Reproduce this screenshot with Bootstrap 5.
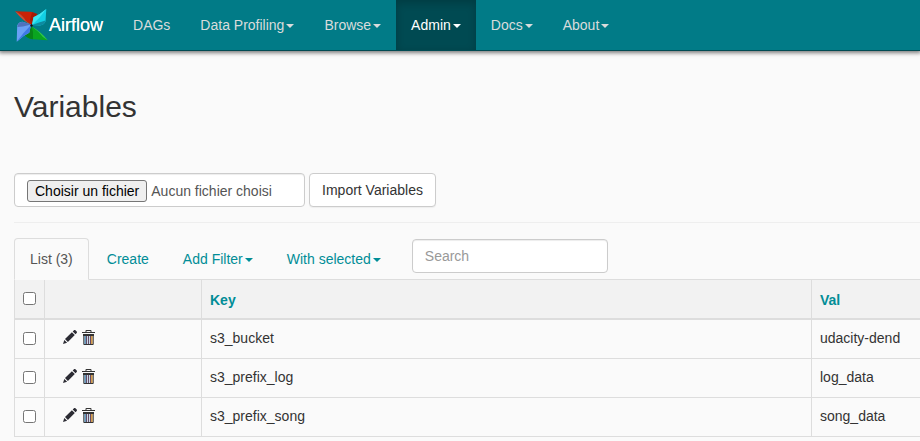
<!DOCTYPE html>
<html lang="fr">
<head>
<meta charset="utf-8">
<meta name="viewport" content="width=device-width, initial-scale=1">
<title>Airflow - Variables</title>
<link href="https://cdn.jsdelivr.net/npm/bootstrap@5.3.0/dist/css/bootstrap.min.css" rel="stylesheet">
<style>
body{font-family:"Liberation Sans",Arial,sans-serif;font-size:14px;line-height:20px;color:#333;background:#fafafa}
.af-bar{height:51px;background:#017b87;border-bottom:1px solid #014b53;box-shadow:0 1px 4px 1px rgba(0,0,0,.5)}
.af-brand{padding:0 15px 0 14px;gap:1px;color:#fff;font-size:18px;height:50px;text-shadow:0 0 .5px #fff}
.af-brand:hover{color:#fff}
.af-bar .nav-link{padding:15px;color:#d9dcdc;height:50px;line-height:20px;white-space:nowrap}
.af-bar .nav-link.active{color:#fff;background:#004a52;box-shadow:inset 0 3px 8px rgba(0,0,0,.2)}
.dropdown-toggle::after{border-top:4px solid;border-left:4px solid transparent;border-right:4px solid transparent;margin-left:2px;vertical-align:2px}
.af-page{padding:0 0 0 14px}
h1.af-title{font-size:30px;line-height:33px;font-weight:400;margin:39px 0 50px}
.af-field{background:#fff;border:1px solid #ccc;border-radius:4px;height:34px}
.af-file{width:291px;padding:6px 12px;color:#555;line-height:22px;box-shadow:inset 0 1px 1px rgba(0,0,0,.075)}
.af-choose{border:1px solid #767676;border-radius:3px;background:#efefef;color:#000;height:22px;padding:0 7px;line-height:20px;white-space:nowrap;margin-right:4px}
.af-import{padding:6px 12px;color:#333;font-size:14px;line-height:20px;width:127px;white-space:nowrap;box-shadow:0 1px 1px rgba(0,0,0,.05)}
.af-rule{height:1px;background:#eee;margin:15px 0}
.af-tabs{border-bottom:1px solid #ddd;height:42px;flex-wrap:nowrap}
.af-tabs .nav-link{padding:10px 15px;color:#018d97;line-height:20px;border-radius:4px 4px 0 0;margin:0 2px 0 0;height:42px;white-space:nowrap}
.af-tabs .nav-link.active{color:#555;background:#fafafa;border-color:#ddd #ddd #fafafa}
.af-search{width:196px;padding:6px 12px;font-size:14px;line-height:20px;color:#555;margin:1px 0 0 13px;box-shadow:inset 0 1px 1px rgba(0,0,0,.075)}
.af-search::placeholder{color:#999;opacity:1}
.af-table{width:calc(100% + 1px);table-layout:fixed;border-collapse:collapse;margin-top:-1px}
.af-table th,.af-table td{border:1px solid #ddd;padding:8px 8px 10px;height:39px;vertical-align:middle;line-height:20px}
.af-table th:last-child,.af-table td:last-child{border-right:0}
.af-table th{background:#f2f2f2;color:#018d97;border-bottom-width:2px;padding:10px 8px 8px}
.af-table .pick{padding:0 0 1px 8px}
.pick input{appearance:none;display:block;width:13px;height:13px;border:1px solid #767676;border-radius:2.5px;background:#fff;margin:0}
.af-table .acts{padding:0 0 4px 18px}
.acts .d-flex{gap:5px}
</style>
</head>
<body class="overflow-hidden">
<svg width="0" height="0" class="d-none">
<symbol id="pencil" viewBox="0 0 14 14"><path fill="#2b2b33" d="M0 14l1.3-4.1 2.8 2.8zM2 9.1L8.9 2.2l2.9 2.900L4.900 12zM9.700 1.500L11 .3c.5-.4 1-.4 1.400 0l1.300 1.300c.4.4.4 1 0 1.400l-1.200 1.300z"/></symbol>
<symbol id="trash" viewBox="0 0 13 15"><path fill="#333" d="M3.500 2V.9Q3.500 0 4.400 0h4.200q.9 0 .9.9V2H13v1H0V2zm1 0h4V1h-4zM1 4h11v2H1z"/><path fill="#333" d="M1.300 6h1.200v8H1.300zM10.500 6h1.200v8h-1.200zM1.500 14h10v1h-10z"/><path fill="#669bbf" d="M2.500 6H4v8H2.500z"/><path fill="#654c65" d="M4 6h1v8H4zM6 6h1v8H6zM8 6h1v8H8z"/><path fill="#c9d9e8" d="M5 6h1v8H5zM7 6h1v8H7z"/><path fill="#d49b49" d="M9 6h1.500v8H9z"/></symbol>
</svg>
<nav class="af-bar d-flex">
<a class="af-brand d-flex align-items-center text-decoration-none" href="#">
<svg width="34" height="34" viewBox="0 0 34 34">
<path fill="#c92206" d="M1 3.200L16 3.700Q22 4.500 24.500 8L17.500 17 12 13Q8 6 1 3.200z"/><path fill="#a51a06" d="M18 4.200Q22.500 5 24.500 8L17.500 17 16 12z"/><path fill="#e0452a" d="M1 3.200Q10 14 17.500 17L12 13Q8 6 1 3.200z"/>
<path fill="#12cfe4" d="M32.300 1L31.500 13.500Q30 17 26 17.500L18 17 19.500 9.300Q26 6.500 32.300 1z"/><path fill="#0e8aa0" d="M31.500 12.500Q30.500 17 26 17.500L18 17 25 14.500z"/><path fill="#3fe6f2" d="M32.300 1Q26 10 18 17L19.500 9.300Q26 6.500 32.300 1z"/>
<path fill="#0aa51f" d="M33.800 32.200L19.300 31.300Q13 30.500 10.800 27L17.700 18.500 24.300 23.700Q28 29 33.800 32.200z"/><path fill="#078418" d="M19 31.300Q13 30.500 10.800 27L17.700 18.500 19 24z"/><path fill="#35cf3c" d="M33.800 32.200Q26 23 17.700 18.500L24.300 23.700Q28 29 33.800 32.200z"/>
<path fill="#6aa0f5" d="M2.700 33.700L3.200 17.500Q4.500 14 8.500 13.700L17 16.500 15.300 24.700Q9 27.500 2.700 33.700z"/><path fill="#4f72bd" d="M3.300 19Q4 14 8.500 13.700L17 16.500 9 18.500z"/><path fill="#3f78e6" d="M2.700 33.700Q9 25 17 17L15.300 24.700Q9 27.500 2.700 33.700z"/>
<circle cx="17.500" cy="17.500" r="1.200" fill="#111"/></svg>
<span>Airflow</span></a>
<ul class="nav flex-nowrap">
<li class="nav-item"><a class="nav-link" href="#">DAGs</a></li>
<li class="nav-item"><a class="nav-link dropdown-toggle" href="#">Data Profiling</a></li>
<li class="nav-item"><a class="nav-link dropdown-toggle" href="#">Browse</a></li>
<li class="nav-item"><a class="nav-link dropdown-toggle active" href="#">Admin</a></li>
<li class="nav-item"><a class="nav-link dropdown-toggle" href="#">Docs</a></li>
<li class="nav-item"><a class="nav-link dropdown-toggle" href="#">About</a></li>
</ul>
</nav>
<main class="af-page overflow-hidden">
<h1 class="af-title">Variables</h1>
<form class="d-flex gap-1">
<label class="af-field af-file d-flex align-items-start"><span class="af-choose">Choisir un fichier</span><span>Aucun fichier choisi</span></label>
<button type="button" class="af-field af-import">Import Variables</button>
</form>
<div class="af-rule"></div>
<ul class="nav nav-tabs af-tabs">
<li class="nav-item"><a class="nav-link active" href="#">List (3)</a></li>
<li class="nav-item"><a class="nav-link" href="#">Create</a></li>
<li class="nav-item"><a class="nav-link dropdown-toggle" href="#">Add Filter</a></li>
<li class="nav-item"><a class="nav-link dropdown-toggle" href="#">With selected</a></li>
<li class="nav-item"><input class="af-field af-search" type="text" placeholder="Search"></li>
</ul>
<table class="af-table">
<colgroup><col style="width:30px"><col style="width:157px"><col style="width:610px"><col></colgroup>
<thead><tr><th class="pick"><input type="checkbox"></th><th></th><th>Key</th><th>Val</th></tr></thead>
<tbody>
<tr><td class="pick"><input type="checkbox"></td><td class="acts"><div class="d-flex"><svg width="14" height="14"><use href="#pencil"/></svg><svg width="13" height="15"><use href="#trash"/></svg></div></td><td>s3_bucket</td><td>udacity-dend</td></tr>
<tr><td class="pick"><input type="checkbox"></td><td class="acts"><div class="d-flex"><svg width="14" height="14"><use href="#pencil"/></svg><svg width="13" height="15"><use href="#trash"/></svg></div></td><td>s3_prefix_log</td><td>log_data</td></tr>
<tr><td class="pick"><input type="checkbox"></td><td class="acts"><div class="d-flex"><svg width="14" height="14"><use href="#pencil"/></svg><svg width="13" height="15"><use href="#trash"/></svg></div></td><td>s3_prefix_song</td><td>song_data</td></tr>
</tbody>
</table>
</main>
</body>
</html>
